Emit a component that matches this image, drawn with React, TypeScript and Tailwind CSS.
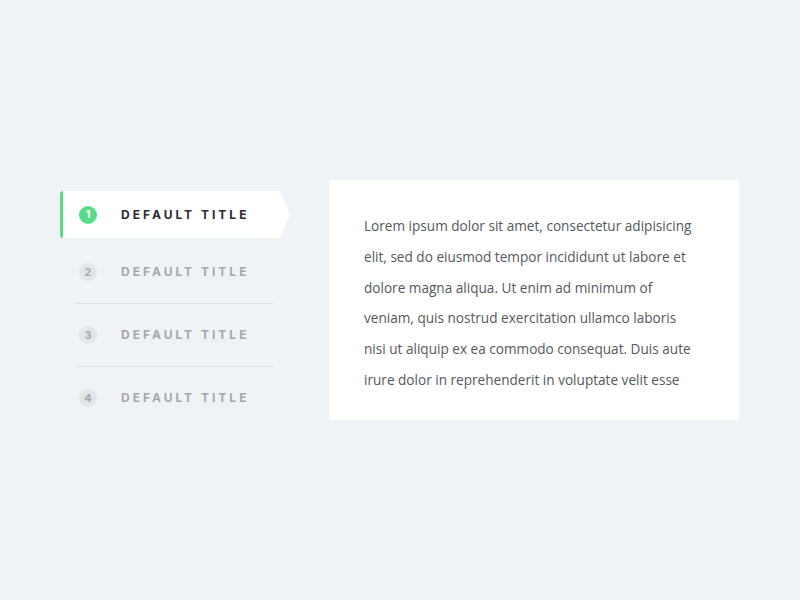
import React from "react";

const items = ["DEFAULT TITLE", "DEFAULT TITLE", "DEFAULT TITLE", "DEFAULT TITLE"];

export default function App() {
  return (
    <div className="w-[800px] h-[600px] bg-[#eff3f6] flex items-start pl-[60px] pt-[180px]">
      <div className="w-[230px] mt-[11px] flex flex-col">
        <div
          className="h-[47px] bg-white rounded-l-[3px] border-l-[3px] border-[#57dc88] flex items-center pl-[16px]"
          style={{ clipPath: "polygon(0 0, calc(100% - 10px) 0, 100% 50%, calc(100% - 10px) 100%, 0 100%)" }}
        >
          <span className="w-[18px] h-[18px] rounded-full bg-[#57dc88] text-white text-[11px] font-bold flex items-center justify-center font-['Inter',sans-serif]">
            1
          </span>
          <span className="ml-[24px] text-[12px] font-bold tracking-[0.25em] text-[#2a2c30] font-['Inter',sans-serif]">
            {items[0]}
          </span>
        </div>
        <div className="mt-[3px]">
          {[2, 3, 4].map((n, i) => (
            <div key={n}>
              <div className="h-[62px] flex items-center pl-[19px]">
                <span className="w-[18px] h-[18px] rounded-full bg-[#e3e6e9] text-[#a3a6aa] text-[11px] font-bold flex items-center justify-center font-['Inter',sans-serif]">
                  {n}
                </span>
                <span className="ml-[24px] text-[12px] font-bold tracking-[0.25em] text-[#a5a8ac] font-['Inter',sans-serif]">
                  {items[n - 1]}
                </span>
              </div>
              {i < 2 && <div className="ml-[15px] w-[198px] h-px bg-[#dcdfe3]" />}
            </div>
          ))}
        </div>
      </div>
      <div className="ml-[39px] w-[410px] h-[240px] bg-white rounded-[3px] pl-[35px] pt-[31px]">
        <p className="w-[332px] text-[13.6px] leading-[30.8px] text-[#55585d] font-['Open_Sans',sans-serif]">
          Lorem ipsum dolor sit amet, consectetur adipisicing elit, sed do eiusmod tempor incididunt ut labore et
          dolore magna aliqua. Ut enim ad minimum of veniam, quis nostrud exercitation ullamco laboris nisi ut
          aliquip ex ea commodo consequat. Duis aute irure dolor in reprehenderit in voluptate velit esse
        </p>
      </div>
    </div>
  );
}
